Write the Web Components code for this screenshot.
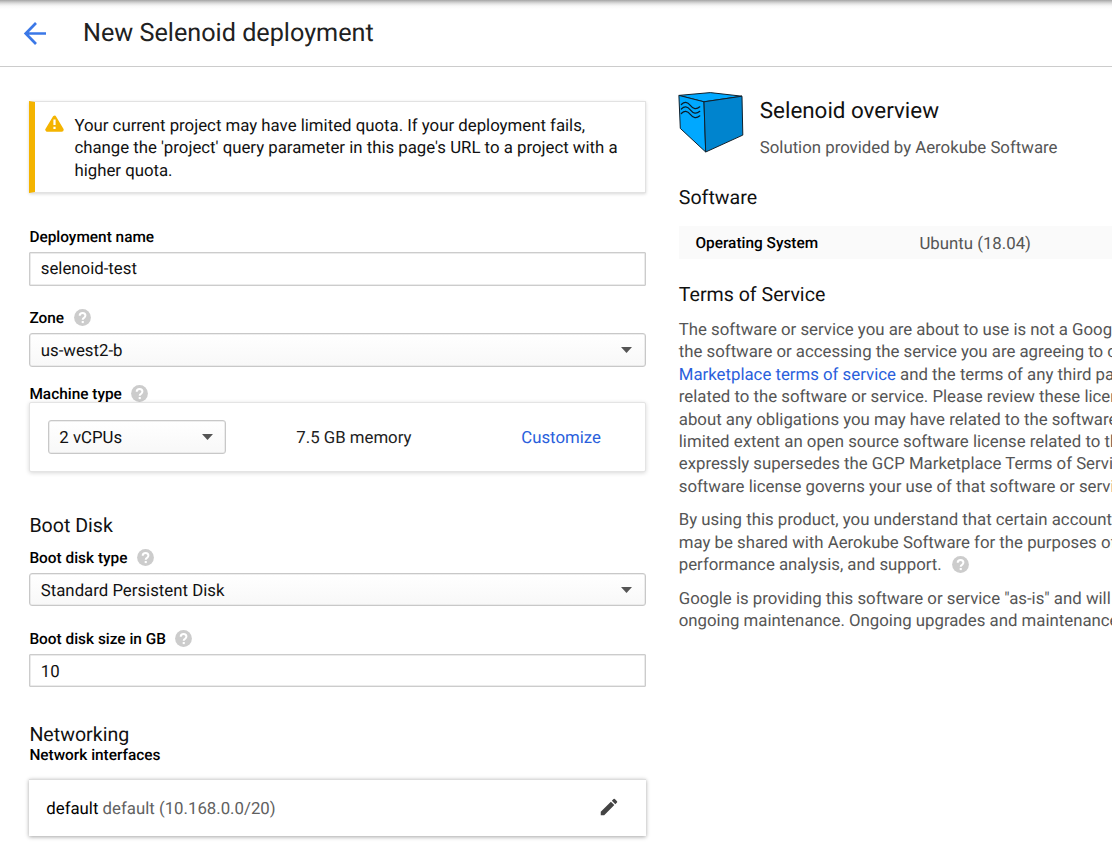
<!DOCTYPE html>
<html lang="en">
<head>
<meta charset="utf-8">
<title>New Selenoid deployment</title>
<style>
html,body{margin:0;height:100%;overflow:hidden;background:#fff}
body{font:16.8px/22.4px Roboto,"Liberation Sans",sans-serif;color:#111;text-rendering:geometricPrecision}
</style>
</head>
<body>
<deploy-page></deploy-page>
<script>
const define = (name, html) => {
  const t = document.createElement('template');
  t.innerHTML = html;
  customElements.define(name, class extends HTMLElement {
    constructor() {
      super();
      this.attachShadow({mode: 'open'}).append(t.content.cloneNode(true));
    }
  });
};

define('help-icon', `
<style>:host{display:inline-block;width:17px;height:17px;flex:none}svg{display:block}</style>
<svg width="17" height="17" viewBox="0 0 17 17"><circle cx="8.5" cy="8.5" r="8.4" fill="#ccc"/>
<path d="M5.7 6.7C5.7 5 6.9 4 8.6 4s2.8 1 2.8 2.5c0 1.2-.7 1.7-1.4 2.3-.7.5-1.3.9-1.3 1.9" fill="none" stroke="#fff" stroke-width="2"/><rect x="7.7" y="12" width="2.1" height="2.1" fill="#fff"/></svg>`);

define('page-header', `
<style>
:host{display:flex;align-items:center;height:66px;border-bottom:1px solid #ccc;padding-left:23px;
background:linear-gradient(#a4a4a4,#c9c9c9 2px,#e6e6e6 4px,#f8f8f8 6px,#fff 9px)}
svg{display:block;margin-right:36px}
h1{margin:0;padding-top:2px;font-size:25.2px;line-height:34px;font-weight:400;color:#212121;white-space:nowrap}
</style>
<svg width="24" height="24" viewBox="0 0 24 24" fill="none" stroke="#3b78e7" stroke-width="2.7"><path d="M23 12.5H3M13 2L2.7 12.5 13 23"/></svg>
<h1><slot></slot></h1>`);

define('quota-alert', `
<style>
:host{display:flex;box-sizing:border-box;height:92px;border:1px solid #e2e2e2;border-left:6px solid #f4b400;padding:13px 20px 0 9px;box-shadow:0 1px 3px rgba(0,0,0,.16)}
svg{flex:none;margin:0 10px 0 1px}
p{margin:0;white-space:nowrap}
</style>
<svg width="19" height="19" viewBox="0 0 19 19"><path d="M9.5 2.7L2.3 14.7h14.4z" fill="#f4b400" stroke="#f4b400" stroke-width="4" stroke-linejoin="round"/><path d="M8.4 4.5h2.2v5.6H8.4zM8.4 11.8h2.2v2.2H8.4z" fill="#fff"/></svg>
<p><slot></slot></p>`);

define('field-label', `
<style>:host{display:flex;align-items:center;height:22px;font-size:15.4px;font-weight:500;color:#000;gap:9.5px;white-space:nowrap}::slotted(help-icon){margin-top:-1px}</style>
<span><slot></slot></span><slot name="help"></slot>`);

define('text-box', `
<style>:host{display:flex;align-items:center;box-sizing:border-box;height:34px;border:1px solid #ccc;box-shadow:inset 0 0 0 .5px #d8d8d8;padding:1px 10.4px 0;border-radius:1px;color:#111}</style>
<slot></slot>`);

define('select-box', `
<style>:host{display:flex;align-items:center;justify-content:space-between;box-sizing:border-box;height:34px;border:1px solid #c8c8c8;box-shadow:inset 0 0 0 .5px #ddd;border-radius:3px;padding:0 12.4px 0 10.4px;background:linear-gradient(#fff,#f8f8f8);color:#111}
span{padding-top:2px}</style>
<span><slot></slot></span><svg width="11" height="6" viewBox="0 0 11 6"><path d="M0 0h11L5.5 6z" fill="#555"/></svg>`);

define('section-title', `
<style>:host{display:block;font-size:19.6px;height:22px;line-height:24px;color:#111;white-space:nowrap}</style><slot></slot>`);

define('machine-card', `
<style>
:host{display:grid;grid-template-columns:178px 225px 1fr;align-items:center;box-sizing:border-box;height:70px;border:1px solid #e4e4e4;border-radius:2px;box-shadow:0 1px 4px rgba(0,0,0,.16);padding:0 17.5px;background:#fff}
.mem{padding:2px 0 0 70.4px;color:#212121}
.link{color:#2a5fdc;padding:2px 0 0 70.4px}
</style>
<select-box>2 vCPUs</select-box><span class="mem">7.5 GB memory</span><span class="link">Customize</span>`);

define('network-card', `
<style>
:host{display:flex;align-items:center;justify-content:space-between;box-sizing:border-box;height:57px;border-top:1px solid #ddd;box-shadow:0 1px 4px rgba(0,0,0,.36);padding:0 26px 0 17.4px;background:#fff}
b{font-weight:400;color:#000}.net{color:#616161;padding-top:2px}svg{margin-top:-2px}
</style>
<span class="net"><b><slot name="name"></slot></b> <slot></slot></span>
<svg width="22" height="22" viewBox="0 0 24 24" fill="#444"><path d="M3 17.25V21h3.75L17.81 9.94l-3.75-3.75L3 17.25zM20.71 7.04a1 1 0 0 0 0-1.41l-2.34-2.34a1 1 0 0 0-1.41 0l-1.83 1.83 3.75 3.75 1.83-1.83z"/></svg>`);

define('deploy-form', `
<style>
:host{display:flex;flex-direction:column;width:616.2px;padding:34px 0 0 29.4px;flex:none}
</style>
<quota-alert>Your current project may have limited quota. If your deployment fails,<br>change the 'project' query parameter in this page's URL to a project with a<br>higher quota.</quota-alert>
<field-label style="margin-top:33px">Deployment name</field-label>
<text-box style="margin-top:4px">selenoid-test</text-box>
<field-label style="margin-top:21px">Zone<help-icon slot="help"></help-icon></field-label>
<select-box style="margin-top:4px">us-west2-b</select-box>
<field-label style="margin-top:16px">Machine type<help-icon slot="help"></help-icon></field-label>
<machine-card style="margin-top:-3px"></machine-card>
<section-title style="margin-top:42px">Boot Disk</section-title>
<field-label style="margin-top:11px">Boot disk type<help-icon slot="help"></help-icon></field-label>
<select-box style="margin-top:4px;height:33px;padding-top:1px">Standard Persistent Disk</select-box>
<field-label style="margin-top:22px">Boot disk size in GB<help-icon slot="help"></help-icon></field-label>
<text-box style="margin-top:4px;height:33px;padding-top:3px">10</text-box>
<section-title style="margin-top:36px">Networking</section-title>
<field-label style="margin-top:-1px">Network interfaces</field-label>
<network-card style="margin:13px -.5px 0 -.5px"><span slot="name">default</span>default (10.168.0.0/20)</network-card>`);

define('cube-logo', `
<style>:host{display:block;width:66px;height:62px;flex:none}svg{display:block}</style>
<svg width="66" height="62" viewBox="0.7 0 66 62" stroke="#10202c" stroke-width="1" stroke-linejoin="round" overflow="visible">
<path d="M.6 3.4L32 .6l31.700 3.600-38 5.600z" fill="#00a8ff"/>
<path d="M.6 3.4l25.1 6.4 1.7 50.2L2 36.4z" fill="#00a8ff"/>
<path d="M25.7 9.8l38-5.6.8 38.9L27.4 60z" fill="#0084ce"/>
<g fill="none" stroke="#0b1a26" stroke-width="1.2" stroke-linecap="round"><path d="M3 12.500c3-3 6-3 9 .8s6 4.500 9.500 1.500"/><path d="M3 17c3-3 6-3 9 .8s6 4.500 9.500 1.500"/><path d="M3 21.500c3-3 6-3 9 .8s6 4.500 9.500 1.500"/></g>
</svg>`);

define('solution-overview', `
<style>
:host{display:block;flex:1;min-width:0;padding:25px 0 0 33.2px;overflow:hidden;color:#555;white-space:nowrap}
.top{display:flex;gap:15px}
.top h2{margin:5px 0 0;font-size:22.4px;line-height:28px;font-weight:400;color:#111}
.top p{margin:12px 0 0}
.row{display:grid;grid-template-columns:224px 1fr;align-items:center;height:33px;background:#fafafa;padding-left:16.7px;margin-top:18px}
.row b{font-size:15.4px;font-weight:500;color:#000}
.row span{padding-top:2px}
.text{margin:0 0 11.2px}
a{color:#2a5fdc}
help-icon{vertical-align:-3px;margin-left:6px}
</style>
<div class="top"><cube-logo></cube-logo><div><h2>Selenoid overview</h2><p>Solution provided by Aerokube Software</p></div></div>
<section-title style="margin-top:27px">Software</section-title>
<div class="row"><b>Operating System</b><span>Ubuntu (18.04)</span></div>
<section-title style="margin:24px 0 13.6px">Terms of Service</section-title>
<p class="text">The software or service you are about to use is not a Goog<br>the software or accessing the service you are agreeing to c<br><a>Marketplace terms of service</a> and the terms of any third pa<br>related to the software or service. Please review these licen<br>about any obligations you may have related to the software<br>limited extent an open source software license related to th<br>expressly supersedes the GCP Marketplace Terms of Servi<br>software license governs your use of that software or servi</p>
<p class="text">By using this product, you understand that certain account<br>may be shared with Aerokube Software for the purposes of<br>performance analysis, and support. <help-icon></help-icon></p>
<p class="text">Google is providing this software or service "as-is" and will<br>ongoing maintenance. Ongoing upgrades and maintenance</p>`);

define('deploy-page', `
<style>:host{display:block;height:100vh;overflow:hidden}main{display:flex}</style>
<page-header>New Selenoid deployment</page-header>
<main><deploy-form></deploy-form><solution-overview></solution-overview></main>`);
</script>
</body>
</html>
